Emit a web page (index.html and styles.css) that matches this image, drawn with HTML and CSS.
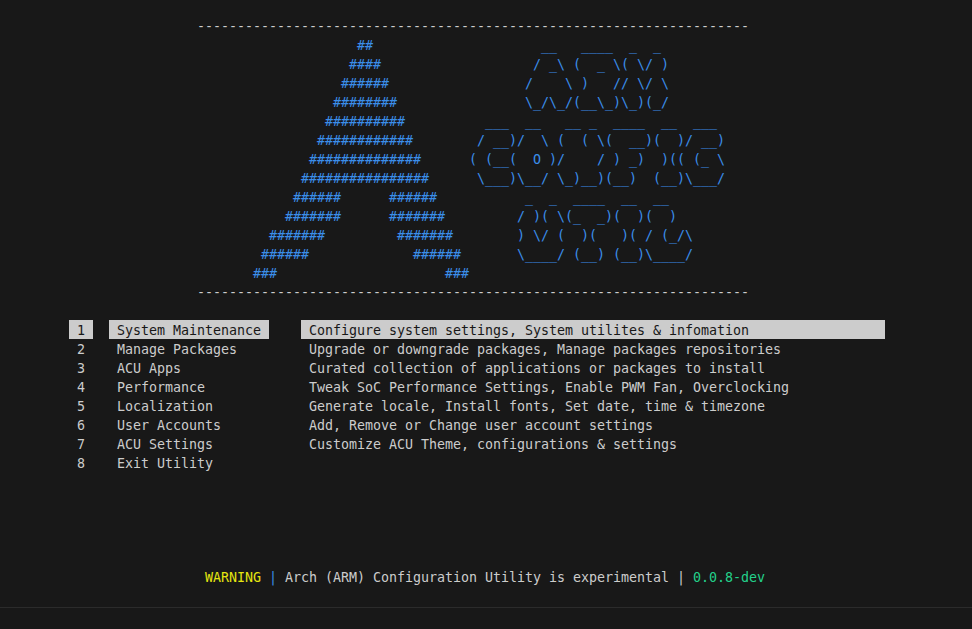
FILE: index.html
```html
<!DOCTYPE html>
<html lang="en">
<head>
<meta charset="utf-8">
<title>ACU</title>
<link rel="stylesheet" href="styles.css">
</head>
<body>
<main class="terminal">
<header class="banner">
<pre class="rule">---------------------------------------------------------------------</pre>
<div class="art">
<pre class="logo">             ##
            ####
           ######
          ########
         ##########
        ############
       ##############
      ################
     ######      ######
    #######      #######
  #######         #######
 ######             ######
###                     ###</pre>
<pre class="logo">         __   ____  _  _
        / _\ (  _ \( \/ )
       /    \ )   // \/ \
       \_/\_/(__\_)\_)(_/
  ___  __   __ _  ____  __  ___
 / __)/  \ (  ( \(  __)(  )/ __)
( (__(  O )/    / ) _)  )(( (_ \
 \___)\__/ \_)__)(__)  (__)\___/
       _  _  ____  __  __
      / )( \(_  _)(  )(  )
      ) \/ (  )(   )( / (_/\
      \____/ (__) (__)\____/</pre>
</div>
<pre class="rule">---------------------------------------------------------------------</pre>
</header>
<section class="menu">
<div class="item selected"><span>1</span><span>System Maintenance</span><span>Configure system settings, System utilites &amp; infomation</span></div>
<div class="item"><span>2</span><span>Manage Packages</span><span>Upgrade or downgrade packages, Manage packages repositories</span></div>
<div class="item"><span>3</span><span>ACU Apps</span><span>Curated collection of applications or packages to install</span></div>
<div class="item"><span>4</span><span>Performance</span><span>Tweak SoC Performance Settings, Enable PWM Fan, Overclocking</span></div>
<div class="item"><span>5</span><span>Localization</span><span>Generate locale, Install fonts, Set date, time &amp; timezone</span></div>
<div class="item"><span>6</span><span>User Accounts</span><span>Add, Remove or Change user account settings</span></div>
<div class="item"><span>7</span><span>ACU Settings</span><span>Customize ACU Theme, configurations &amp; settings</span></div>
<div class="item"><span>8</span><span>Exit Utility</span><span></span></div>
</section>
<footer class="status"><span class="warn">WARNING</span> <span class="sep">|</span> Arch (ARM) Configuration Utility is experimental | <span class="ver">0.0.8-dev</span></footer>
</main>
<div class="panel-edge"></div>
</body>
</html>
```
FILE: styles.css
```css
html, body {
  margin: 0;
  height: 100%;
  overflow: hidden;
  background: #181818;
}
body {
  color: #cccccc;
  font-family: "DejaVu Sans Mono", monospace;
  font-size: 13.33px;
  letter-spacing: -0.025px;
  line-height: 19px;
}
pre {
  margin: 0;
  font: inherit;
  letter-spacing: inherit;
}
.terminal {
  padding: 17px 5px 0;
  height: 591px;
  box-sizing: border-box;
}
.rule {
  padding-left: 192px;
}
.art {
  display: flex;
  padding-left: 248px;
  height: 247px;
}
.logo {
  width: 216px;
  color: #3b8eea;
}
.logo + .logo {
  width: auto;
}
.menu {
  margin-top: 18px;
  padding-left: 64px;
}
.item {
  display: grid;
  grid-template-columns: 24px 160px 600px;
  grid-template-rows: 19px;
  column-gap: 16px;
}
.item span {
  height: 19px;
  padding: 0 8px;
  line-height: 21px;
  white-space: pre;
}
.item span:nth-child(3) {
  margin-left: 16px;
}
.selected span {
  background: #cccccc;
  color: #181818;
}
.status {
  margin-top: 96px;
  padding-left: 200px;
  white-space: pre;
}
.warn { color: #e5e510; }
.sep { color: #3b8eea; }
.ver { color: #23d18b; }
.panel-edge {
  height: 1px;
  margin-top: 16px;
  background: #2b2b2b;
}
```
